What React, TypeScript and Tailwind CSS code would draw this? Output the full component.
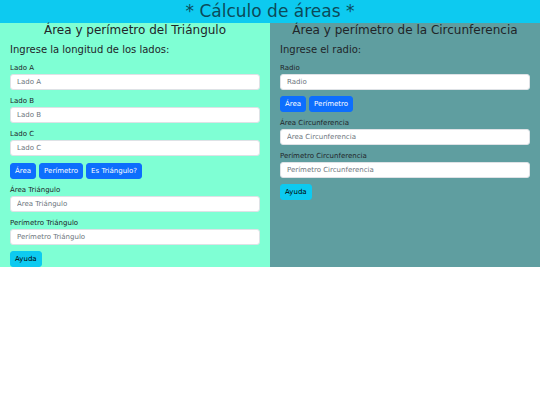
import type { ReactNode } from "react";

function Field({ label }: { label: string }) {
  return (
    <div className="mb-[6px]">
      <label className="block text-[7px] leading-[10px] mb-[1px] text-[#212529]">{label}</label>
      <input
        type="text"
        placeholder={label}
        className="block w-full h-[16px] px-[6px] text-[7px] bg-white border border-[#dee2e6] rounded-[3px] text-[#212529] placeholder:text-[#6c757d] outline-none"
      />
    </div>
  );
}

function Btn({ children }: { children: ReactNode }) {
  return (
    <button
      type="button"
      className="h-[16px] px-[4px] text-[7px] leading-none text-white bg-[#0d6efd] border border-[#0d6efd] rounded-[3px]"
    >
      {children}
    </button>
  );
}

function Ayuda() {
  return (
    <div className="flex">
      <button
        type="button"
        className="h-[16px] px-[4px] text-[7px] leading-none text-black bg-[#0dcaf0] border border-[#0dcaf0] rounded-[3px]"
      >
        Ayuda
      </button>
    </div>
  );
}

function Panel({ title, hint, children, bg }: { title: string; hint: string; children: ReactNode; bg: string }) {
  return (
    <section className={`px-[10px] ${bg}`}>
      <h2 className="text-center text-[12px] leading-[15px] text-[#212529]">{title}</h2>
      <p className="mt-[5px] mb-[6px] text-[10px] leading-[14px] text-[#212529]">{hint}</p>
      {children}
    </section>
  );
}

export default function App() {
  return (
    <div className="w-[540px] font-['DejaVu_Sans',sans-serif]">
      <header className="h-[23px] bg-[#0dcaf0] flex items-center justify-center">
        <h1 className="text-[17px] leading-[23px] text-[#0b4a5a]">* Cálculo de áreas *</h1>
      </header>
      <div className="grid grid-cols-2">
        <Panel title="Área y perímetro del Triángulo" hint="Ingrese la longitud de los lados:" bg="bg-[#7fffd4]">
          <Field label="Lado A" />
          <Field label="Lado B" />
          <Field label="Lado C" />
          <div className="flex gap-[3px] mb-[6px] pt-[1px]">
            <Btn>Área</Btn>
            <Btn>Perímetro</Btn>
            <Btn>Es Triángulo?</Btn>
          </div>
          <Field label="Área Triángulo" />
          <Field label="Perímetro Triángulo" />
          <Ayuda />
        </Panel>
        <Panel title="Área y perímetro de la Circunferencia" hint="Ingrese el radio:" bg="bg-[#5f9ea0]">
          <Field label="Radio" />
          <div className="flex gap-[3px] mb-[6px]">
            <Btn>Área</Btn>
            <Btn>Perímetro</Btn>
          </div>
          <Field label="Área Circunferencia" />
          <Field label="Perímetro Circunferencia" />
          <Ayuda />
        </Panel>
      </div>
    </div>
  );
}
